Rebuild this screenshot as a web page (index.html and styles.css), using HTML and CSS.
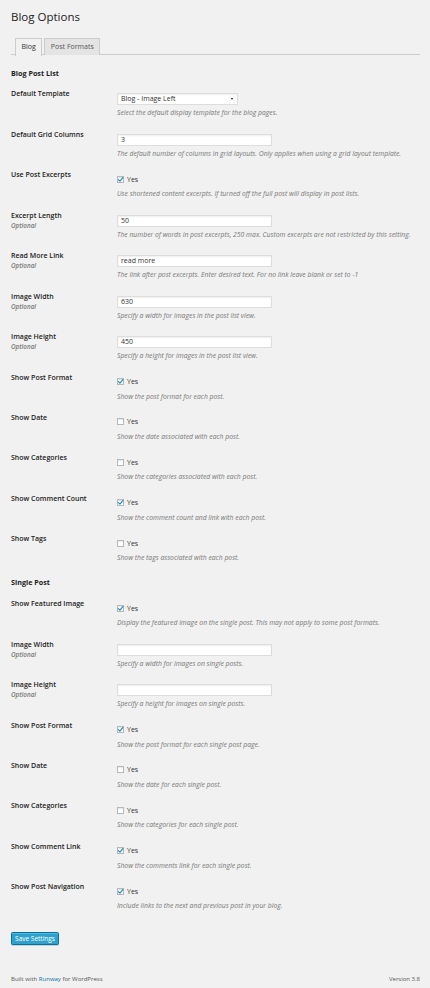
FILE: index.html
```html
<!DOCTYPE html>
<html lang="en">
<head>
<meta charset="utf-8">
<title>Blog Options</title>
<link rel="stylesheet" href="styles.css">
</head>
<body>
<div class="wrap">
  <h1 class="title">Blog Options</h1>
  <nav class="tabs">
    <a class="tab active">Blog</a>
    <a class="tab">Post Formats</a>
  </nav>

  <h3 class="section first">Blog Post List</h3>

  <div class="row">
    <div class="lbl">Default Template</div>
    <div class="fld">
      <div class="select"><span>Blog - Image Left</span><span class="arrow"></span></div>
      <p class="desc">Select the default display template for the blog pages.</p>
    </div>
  </div>
  <div class="row">
    <div class="lbl">Default Grid Columns</div>
    <div class="fld">
      <div class="input">3</div>
      <p class="desc">The default number of columns in grid layouts. Only applies when using a grid layout template.</p>
    </div>
  </div>
  <div class="row">
    <div class="lbl">Use Post Excerpts</div>
    <div class="fld">
      <label class="check"><span class="box on"><svg viewBox="0 0 10 10"><path d="M2 5.2 L4.2 7.4 L8.4 2.2" /></svg></span>Yes</label>
      <p class="desc cb">Use shortened content excerpts. If turned off the full post will display in post lists.</p>
    </div>
  </div>
  <div class="row">
    <div class="lbl">Excerpt Length<span class="opt">Optional</span></div>
    <div class="fld">
      <div class="input">50</div>
      <p class="desc">The number of words in post excerpts, 250 max. Custom excerpts are not restricted by this setting.</p>
    </div>
  </div>
  <div class="row">
    <div class="lbl">Read More Link<span class="opt">Optional</span></div>
    <div class="fld">
      <div class="input">read more</div>
      <p class="desc">The link after post excerpts. Enter desired text. For no link leave blank or set to -1</p>
    </div>
  </div>
  <div class="row">
    <div class="lbl">Image Width<span class="opt">Optional</span></div>
    <div class="fld">
      <div class="input">630</div>
      <p class="desc">Specify a width for images in the post list view.</p>
    </div>
  </div>
  <div class="row">
    <div class="lbl">Image Height<span class="opt">Optional</span></div>
    <div class="fld">
      <div class="input">450</div>
      <p class="desc">Specify a height for images in the post list view.</p>
    </div>
  </div>
  <div class="row">
    <div class="lbl">Show Post Format</div>
    <div class="fld">
      <label class="check"><span class="box on"><svg viewBox="0 0 10 10"><path d="M2 5.2 L4.2 7.4 L8.4 2.2" /></svg></span>Yes</label>
      <p class="desc cb">Show the post format for each post.</p>
    </div>
  </div>
  <div class="row">
    <div class="lbl">Show Date</div>
    <div class="fld">
      <label class="check"><span class="box"></span>Yes</label>
      <p class="desc cb">Show the date associated with each post.</p>
    </div>
  </div>
  <div class="row">
    <div class="lbl">Show Categories</div>
    <div class="fld">
      <label class="check"><span class="box"></span>Yes</label>
      <p class="desc cb">Show the categories associated with each post.</p>
    </div>
  </div>
  <div class="row">
    <div class="lbl">Show Comment Count</div>
    <div class="fld">
      <label class="check"><span class="box on"><svg viewBox="0 0 10 10"><path d="M2 5.2 L4.2 7.4 L8.4 2.2" /></svg></span>Yes</label>
      <p class="desc cb">Show the comment count and link with each post.</p>
    </div>
  </div>
  <div class="row">
    <div class="lbl">Show Tags</div>
    <div class="fld">
      <label class="check"><span class="box"></span>Yes</label>
      <p class="desc cb">Show the tags associated with each post.</p>
    </div>
  </div>

  <h3 class="section">Single Post</h3>

  <div class="row">
    <div class="lbl">Show Featured Image</div>
    <div class="fld">
      <label class="check"><span class="box on"><svg viewBox="0 0 10 10"><path d="M2 5.2 L4.2 7.4 L8.4 2.2" /></svg></span>Yes</label>
      <p class="desc cb">Display the featured image on the single post. This may not apply to some post formats.</p>
    </div>
  </div>
  <div class="row">
    <div class="lbl">Image Width<span class="opt">Optional</span></div>
    <div class="fld">
      <div class="input"></div>
      <p class="desc">Specify a width for images on single posts.</p>
    </div>
  </div>
  <div class="row">
    <div class="lbl">Image Height<span class="opt">Optional</span></div>
    <div class="fld">
      <div class="input"></div>
      <p class="desc">Specify a height for images on single posts.</p>
    </div>
  </div>
  <div class="row">
    <div class="lbl">Show Post Format</div>
    <div class="fld">
      <label class="check"><span class="box on"><svg viewBox="0 0 10 10"><path d="M2 5.2 L4.2 7.4 L8.4 2.2" /></svg></span>Yes</label>
      <p class="desc cb">Show the post format for each single post page.</p>
    </div>
  </div>
  <div class="row">
    <div class="lbl">Show Date</div>
    <div class="fld">
      <label class="check"><span class="box"></span>Yes</label>
      <p class="desc cb">Show the date for each single post.</p>
    </div>
  </div>
  <div class="row">
    <div class="lbl">Show Categories</div>
    <div class="fld">
      <label class="check"><span class="box"></span>Yes</label>
      <p class="desc cb">Show the categories for each single post.</p>
    </div>
  </div>
  <div class="row">
    <div class="lbl">Show Comment Link</div>
    <div class="fld">
      <label class="check"><span class="box on"><svg viewBox="0 0 10 10"><path d="M2 5.2 L4.2 7.4 L8.4 2.2" /></svg></span>Yes</label>
      <p class="desc cb">Show the comments link for each single post.</p>
    </div>
  </div>
  <div class="row">
    <div class="lbl">Show Post Navigation</div>
    <div class="fld">
      <label class="check"><span class="box on"><svg viewBox="0 0 10 10"><path d="M2 5.2 L4.2 7.4 L8.4 2.2" /></svg></span>Yes</label>
      <p class="desc cb">Include links to the next and previous post in your blog.</p>
    </div>
  </div>

  <button class="save" type="button">Save Settings</button>

  <footer class="foot">
    <span>Built with <a class="link">Runway</a> for WordPress</span>
    <span>Version 3.8</span>
  </footer>
</div>
</body>
</html>
```
FILE: styles.css
```css
html, body {
  margin: 0;
  padding: 0;
  background: #f1f1f1;
}
body {
  font-family: "Open Sans", "Noto Sans", sans-serif;
  color: #444;
  font-size: 6.5px;
}
.wrap {
  padding: 0 10px 0 11px;
}
.title {
  margin: 0;
  padding-top: 10px;
  font-size: 11.5px;
  line-height: 13px;
  font-weight: 400;
  color: #222;
}
.tabs {
  display: flex;
  gap: 2px;
  margin-top: 15px;
  padding-left: 4px;
  border-bottom: 1px solid #ccc;
  height: 17px;
  box-sizing: border-box;
}
.tab {
  display: block;
  height: 17px;
  box-sizing: border-box;
  border: 1px solid #ccc;
  border-bottom: none;
  background: #e4e4e4;
  color: #555;
  font-size: 7px;
  line-height: 16px;
  padding: 0 5.5px;
}
.tab.active {
  background: #f1f1f1;
  color: #333;
  height: 18px;
}
.section {
  margin: 3.5px 0 11px;
  font-size: 7.2px;
  line-height: 10px;
  font-weight: 700;
  color: #222;
}
.section.first {
  margin-top: 13.2px;
  margin-bottom: 10.3px;
}
.row {
  display: grid;
  grid-template-columns: 106px 1fr;
  padding-bottom: 10.45px;
}
.lbl {
  padding-top: 1px;
  font-size: 7px;
  line-height: 10px;
  font-weight: 600;
  color: #222;
}
.opt {
  display: block;
  font-size: 6.3px;
  font-style: italic;
  font-weight: 600;
  color: #777;
}
.fld {
  padding-top: 5px;
}
.input, .select {
  width: 155px;
  height: 12px;
  box-sizing: border-box;
  border: 1px solid #ddd;
  background: #fff;
  box-shadow: inset 0 1px 2px rgba(0,0,0,0.07);
  font-size: 7px;
  line-height: 10px;
  padding: 0 3px;
  color: #333;
  margin-bottom: 3px;
}
.select {
  width: 121px;
  display: flex;
  align-items: center;
  justify-content: space-between;
}
.arrow {
  width: 0;
  height: 0;
  border-left: 1.6px solid transparent;
  border-right: 1.6px solid transparent;
  border-top: 2.4px solid #111;
  margin-right: 1px;
}
.check {
  display: flex;
  align-items: center;
  gap: 3px;
  height: 10px;
  font-size: 7px;
  color: #333;
}
.box {
  width: 7px;
  height: 7px;
  box-sizing: border-box;
  border: 1px solid #b4b9be;
  background: #fff;
  box-shadow: inset 0 1px 1px rgba(0,0,0,0.1);
  display: flex;
  align-items: center;
  justify-content: center;
}
.box svg {
  width: 7px;
  height: 7px;
  flex: none;
  overflow: visible;
}
.box svg path {
  fill: none;
  stroke: #1e8cbe;
  stroke-width: 1.6;
  stroke-linecap: round;
  stroke-linejoin: round;
}
.desc {
  margin: 0;
  font-size: 6.8px;
  line-height: 10px;
  font-style: italic;
  color: #777;
  white-space: nowrap;
}
.desc.cb {
  margin-top: 5px;
}
.save {
  display: block;
  margin-top: 10.5px;
  width: 48px;
  height: 13px;
  padding: 0;
  border: 1px solid #0074a2;
  border-radius: 1.5px;
  background: #2ea2cc;
  box-shadow: inset 0 1px 0 rgba(120,200,230,0.5), 0 1px 0 rgba(0,0,0,0.15);
  color: #fff;
  font-family: "Open Sans", "Noto Sans", sans-serif;
  font-size: 6.5px;
  line-height: 11px;
}
.foot {
  display: flex;
  justify-content: space-between;
  margin-top: 28.5px;
  line-height: 10px;
  font-size: 6px;
  color: #555;
}
.link {
  color: #0074a2;
}
```
